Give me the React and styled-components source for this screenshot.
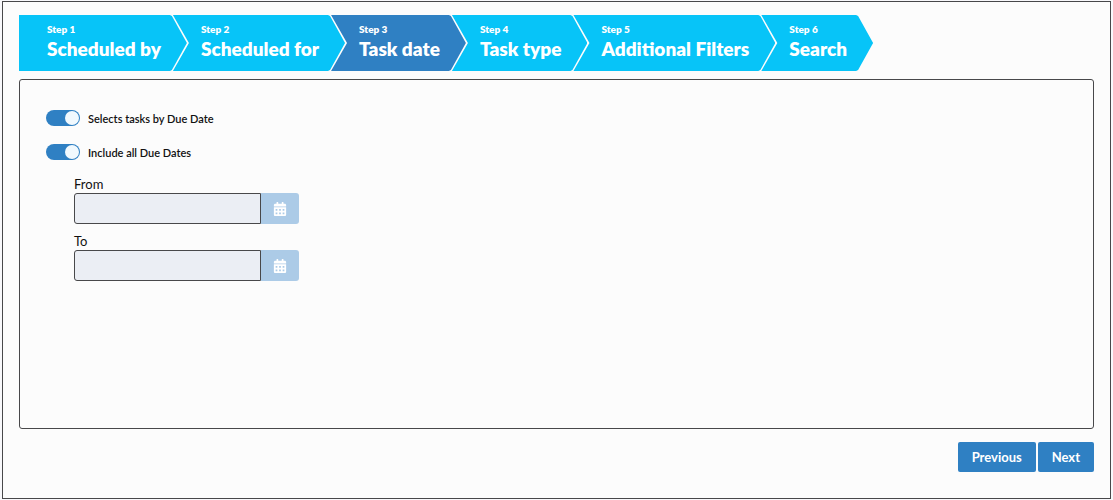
import React, { useState } from 'react'
import styled, { createGlobalStyle } from 'styled-components'
import { FaCalendarAlt } from 'react-icons/fa'

const steps = ['Scheduled by', 'Scheduled for', 'Task date', 'Task type', 'Additional Filters', 'Search']

function DateField({ id, label, disabled }) {
    return (
        <DateFieldStyled>
            <label htmlFor={id}>{label}</label>
            <div className="group">
                <input id={id} type="text" disabled={disabled} />
                <button type="button" aria-label={`Pick ${label} date`} disabled={disabled}>
                    <FaCalendarAlt size={14} />
                </button>
            </div>
        </DateFieldStyled>
    )
}

function Switch({ label, checked, onChange }) {
    return (
        <SwitchStyled>
            <input type="checkbox" checked={checked} onChange={(e) => onChange(e.target.checked)} />
            <span>{label}</span>
        </SwitchStyled>
    )
}

function App() {
    const [current, setCurrent] = useState(2)
    const [byDueDate, setByDueDate] = useState(true)
    const [allDates, setAllDates] = useState(true)

    return (
        <>
            <GlobalStyle />
            <Frame>
                <Steps>
                    {
                        steps.map((title, index) => {
                            return <li key={title}>
                                <Step type="button" $first={index === 0} $active={index === current} onClick={() => setCurrent(index)}>
                                    <small>Step {index + 1}</small>
                                    <strong>{title}</strong>
                                </Step>
                            </li>
                        })
                    }
                </Steps>
                <Panel>
                    <Switches>
                        <Switch label="Selects tasks by Due Date" checked={byDueDate} onChange={setByDueDate} />
                        <Switch label="Include all Due Dates" checked={allDates} onChange={setAllDates} />
                    </Switches>
                    <Dates>
                        <DateField id="from" label="From" disabled={allDates} />
                        <DateField id="to" label="To" disabled={allDates} />
                    </Dates>
                </Panel>
                <Actions>
                    <ActionButton type="button" onClick={() => setCurrent(Math.max(current - 1, 0))}>Previous</ActionButton>
                    <ActionButton type="button" onClick={() => setCurrent(Math.min(current + 1, steps.length - 1))}>Next</ActionButton>
                </Actions>
            </Frame>
        </>
    )
}

const GlobalStyle = createGlobalStyle`
    *{
        box-sizing: border-box;
    }
    body{
        background: #f8f8fb;
        color: #111;
        font-family: Lato, sans-serif;
        margin: 0;
    }
    button, input{
        font-family: inherit;
    }
`

const Frame = styled.main`
    background: #fcfcfc;
    border: 1px solid #48484a;
    display: flex;
    flex-direction: column;
    margin: 0 2px;
    min-height: calc(100vh - 2px);
    padding: 13px 16px 26px;
    #root:has(> &){
        padding: 1px 0;
    }
`

const Steps = styled.ol`
    display: flex;
    list-style: none;
    margin: 0 0 8px;
    padding: 0;
    li + li{
        margin-left: -14px;
    }
`

const Step = styled.button`
    background: ${({ $active }) => ($active ? '#2f80c3' : '#07c4f8')};
    border: 0;
    clip-path: ${({ $first }) => ($first
        ? 'polygon(0 0, calc(100% - 17px) 0, calc(100% - 15px) 1px, 100% 50%, calc(100% - 15px) calc(100% - 1px), calc(100% - 17px) 100%, 0 100%)'
        : 'polygon(0 0, calc(100% - 17px) 0, calc(100% - 15px) 1px, 100% 50%, calc(100% - 15px) calc(100% - 1px), calc(100% - 17px) 100%, 0 100%, 16px 50%)')};
    color: #fff;
    cursor: pointer;
    display: flex;
    flex-direction: column;
    height: 56px;
    padding: 7px 26px 0 28px;
    text-align: left;
    white-space: nowrap;
    small{
        font-size: 10px;
        font-weight: 800;
        line-height: 14px;
    }
    strong{
        font-size: 19px;
        font-weight: 800;
        line-height: 26px;
    }
`

const Panel = styled.section`
    border: 1px solid #48484a;
    border-radius: 3px;
    flex: 1;
    padding: 30px 26px;
`

const Switches = styled.div`
    display: flex;
    flex-direction: column;
    gap: 18px;
    margin-bottom: 15px;
`

const SwitchStyled = styled.label`
    align-items: flex-start;
    cursor: pointer;
    display: flex;
    font-size: 11px;
    font-weight: 600;
    gap: 8px;
    height: 16px;
    line-height: 18px;
    input{
        appearance: none;
        background: #9aa5b1;
        border-radius: 8px;
        cursor: pointer;
        display: flex;
        height: 16px;
        margin: 0;
        padding: 1px;
        width: 34px;
        &::before{
            background: #f1f9fe;
            border-radius: 50%;
            content: '';
            height: 14px;
            width: 14px;
        }
        &:checked{
            background: #2f80c3;
            justify-content: flex-end;
        }
    }
`

const Dates = styled.div`
    display: flex;
    flex-direction: column;
    gap: 8px;
    padding-left: 28px;
`

const DateFieldStyled = styled.div`
    label{
        display: block;
        font-size: 13px;
        line-height: 18px;
    }
    .group{
        display: flex;
    }
    input{
        background: #ebeef4;
        border: 1px solid #48484a;
        border-radius: 3px 0 0 3px;
        height: 31px;
        padding: 4px 8px;
        width: 187px;
    }
    button{
        align-items: center;
        background: #2f80c3;
        border: 0;
        border-radius: 0 3px 3px 0;
        color: #fff;
        display: flex;
        height: 31px;
        justify-content: center;
        padding: 1px 0 0;
        width: 38px;
        &:disabled{
            background: #accbe7;
        }
    }
`

const Actions = styled.div`
    display: flex;
    gap: 2px;
    justify-content: flex-end;
    margin-top: 13px;
`

const ActionButton = styled.button`
    background: #2f80c3;
    border: 0;
    border-radius: 2px;
    color: #fff;
    cursor: pointer;
    font-size: 13px;
    font-weight: 700;
    height: 30px;
    padding: 0 14px;
`

export default App
